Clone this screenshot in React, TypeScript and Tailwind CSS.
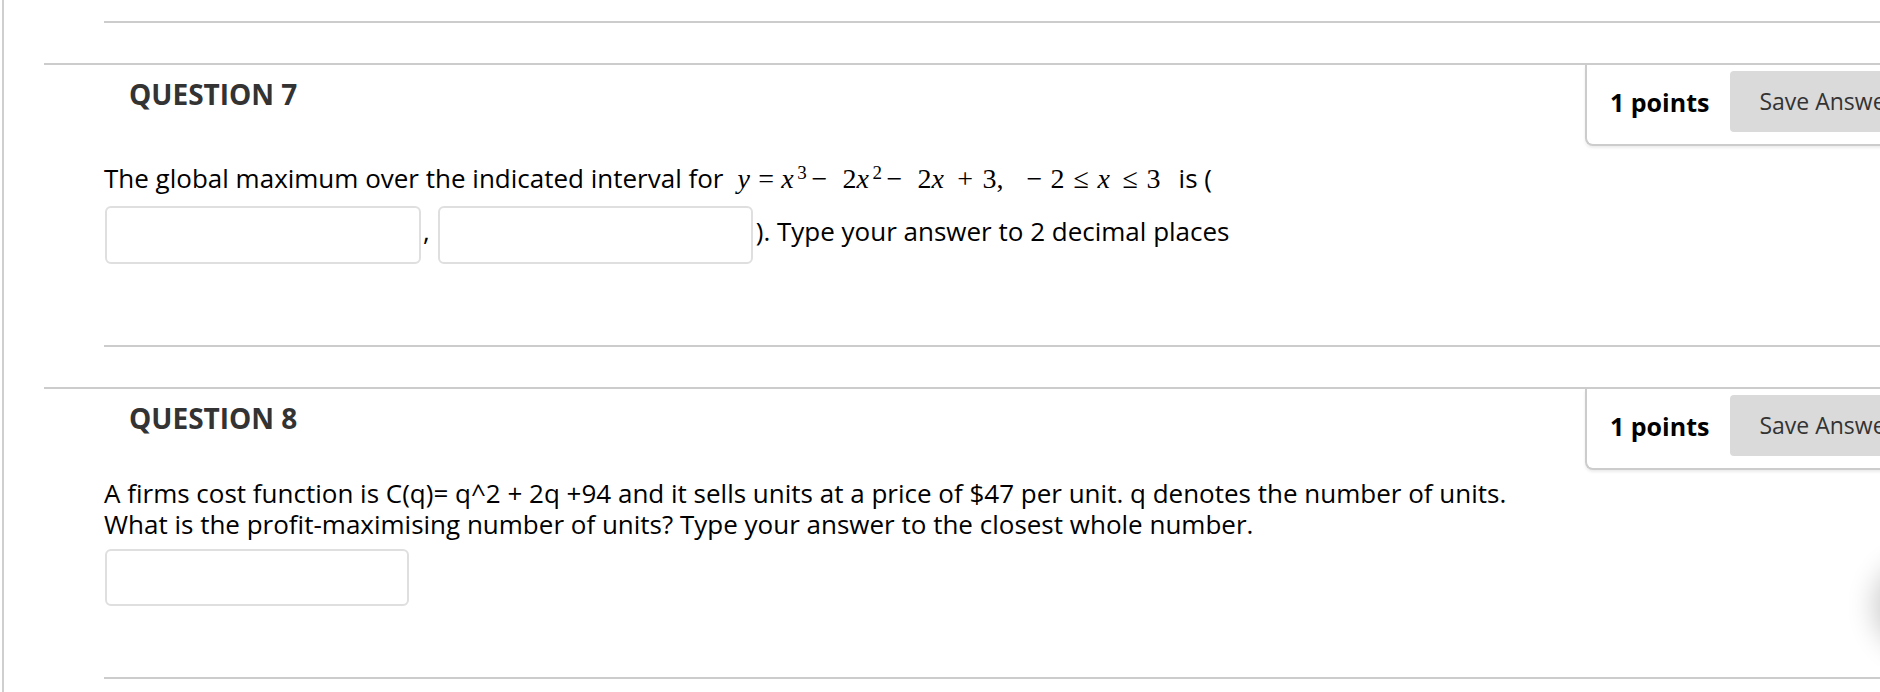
import React from "react";

function PointsBox() {
  return (
    <div className="flex-none w-[375px] mr-[-80px] flex items-center gap-[21px] pl-[23px] pt-[6px] pb-[12px] border-l-2 border-b-2 border-[#cccccc] rounded-bl-[8px] shadow-[0_2px_3px_rgba(0,0,0,0.08)] bg-white">
      <span className="text-[25px] leading-[32px] font-bold text-black whitespace-nowrap">1 points</span>
      <button className="h-[61px] px-[29px] bg-[#dadada] rounded-[4px] text-[23px] text-[#333333] whitespace-nowrap font-['Open_Sans',sans-serif]">
        Save Answer
      </button>
    </div>
  );
}

function Heading({ n }: { n: number }) {
  return (
    <div className="pl-[85px] pt-[10px] text-[28px] leading-[38px] font-bold text-[#333333] whitespace-nowrap">
      QUESTION {n}
    </div>
  );
}

function MathExpr() {
  return (
    <span className="inline-flex items-baseline leading-none font-['Liberation_Serif',serif] text-[28px] text-black ml-[14px]">
      <span className="inline-block w-[13.7px] italic">y</span>
      <span className="inline-block w-[30px] text-center">=</span>
      <span className="inline-block w-[16px] italic">x</span>
      <sup className="inline-block w-[11.2px] text-[19px]">3</sup>
      <span className="inline-block w-[34px] pl-[3px] text-left">−</span>
      <span className="inline-block w-[14px]">2</span>
      <span className="inline-block w-[16px] italic">x</span>
      <sup className="inline-block w-[11.2px] text-[19px]">2</sup>
      <span className="inline-block w-[34px] pl-[3px] text-left">−</span>
      <span className="inline-block w-[14px]">2</span>
      <span className="inline-block w-[16px] italic">x</span>
      <span className="inline-block w-[35px] text-center">+</span>
      <span className="inline-block w-[14px]">3</span>
      <span className="inline-block w-[30px]">,</span>
      <span className="inline-block w-[24px] text-left">−</span>
      <span className="inline-block w-[14px]">2</span>
      <span className="inline-block w-[33px] text-center">≤</span>
      <span className="inline-block w-[16px] italic">x</span>
      <span className="inline-block w-[33px] text-center">≤</span>
      <span className="inline-block w-[14px]">3</span>
    </span>
  );
}

function Input({ w, h }: { w: string; h: string }) {
  return <div className={`${w} ${h} flex-none border-2 border-[#dfdfdf] rounded-[6px] bg-white`} />;
}

export default function App() {
  return (
    <div className="relative w-[1880px] h-[692px] overflow-hidden bg-white flex font-['Open_Sans',sans-serif] text-black">
      <div className="w-[2px] flex-none" />
      <div className="w-[2px] flex-none bg-[#cfcfcf]" />
      <main className="flex-1 min-w-0 pl-[40px]">
        <div className="ml-[60px] h-[23px] border-b-2 border-[#cccccc]" />

        {/* Question 7 */}
        <section className="mt-[40px] border-t-2 border-[#cccccc]">
          <div className="flex items-start justify-between">
            <Heading n={7} />
            <PointsBox />
          </div>
          <div className="ml-[60px] border-b-2 border-[#cccccc] pt-[16px] pb-[81px]">
            <div className="text-[26px] leading-[32px] whitespace-nowrap">
              The global maximum over the indicated interval for
              <MathExpr />
              <span className="ml-[18px]">is (</span>
            </div>
            <div className="mt-[12px] flex items-start text-[26px] leading-[32px]">
              <div className="ml-[1px]">
                <Input w="w-[316px]" h="h-[58px]" />
              </div>
              <span className="ml-[2px] mt-[9px]">,</span>
              <div className="ml-[8px]">
                <Input w="w-[315px]" h="h-[58px]" />
              </div>
              <span className="ml-[3px] mt-[9px] whitespace-nowrap">). Type your answer to 2 decimal places</span>
            </div>
          </div>
        </section>

        {/* Question 8 */}
        <section className="mt-[40px] border-t-2 border-[#cccccc]">
          <div className="flex items-start justify-between">
            <Heading n={8} />
            <PointsBox />
          </div>
          <div className="ml-[60px] border-b-2 border-[#cccccc] pt-[8px] pb-[71px]">
            <p className="text-[26px] leading-[30.5px] whitespace-nowrap">
              A firms cost function is C(q)= q^2 + 2q +94 and it sells units at a price of $47 per unit. q denotes the number of units.
              <br />
              What is the profit-maximising number of units? Type your answer to the closest whole number.
            </p>
            <div className="mt-[10px] ml-[1px]">
              <Input w="w-[304px]" h="h-[57px]" />
            </div>
          </div>
        </section>
      </main>

      <div className="absolute left-[1882px] top-[566px] w-[80px] h-[80px] rounded-full bg-white shadow-[0_0_28px_8px_rgba(0,0,0,0.2)]" />
    </div>
  );
}
